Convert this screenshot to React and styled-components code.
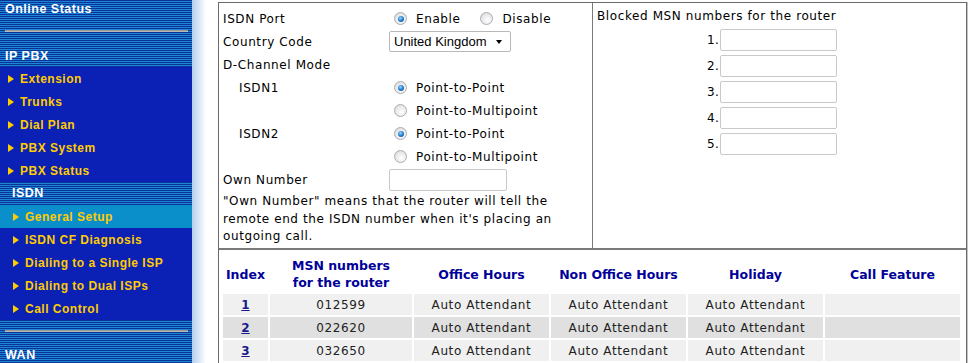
import React from "react";
import styled, { createGlobalStyle } from "styled-components";

const GlobalStyle = createGlobalStyle`
  html, body {
    margin: 0;
    padding: 0;
    background: #fff;
  }
  body {
    width: 975px;
    height: 363px;
    overflow: hidden;
    font-family: "DejaVu Sans", Verdana, sans-serif;
  }
`;

const Page = styled.div`
  display: flex;
  height: 363px;
  overflow: hidden;
`;

/* ---------- left menu ---------- */

const Sidebar = styled.nav`
  width: 192px;
  flex: none;
  display: flex;
  flex-direction: column;
  font-family: "Liberation Sans", Arial, sans-serif;
  font-weight: bold;
  font-size: 12px;
  letter-spacing: 0.5px;
`;

const Stripes = styled.div`
  flex: ${(p) => (p.$grow ? 1 : "none")};
  background: repeating-linear-gradient(
    to bottom,
    #0a3596 0px,
    #0a3596 1px,
    #1d84d6 1px,
    #1d84d6 2px
  );
`;

const SectionTitle = styled.div`
  color: #fff;
  height: ${(p) => p.$h}px;
  line-height: ${(p) => p.$h}px;
  padding-left: ${(p) => (p.$indent ? 12 : 5)}px;
  font-size: 12.5px;
`;

const Separator = styled.div`
  height: 2px;
  margin: ${(p) => p.$top}px 4px ${(p) => p.$bottom}px 5px;
  background: #b8b8b8;
  border-top: 1px solid #9a9a9a;
  box-sizing: border-box;
`;

const MenuBlock = styled.div`
  background: #0b20b4;
`;

const MenuItem = styled.div`
  height: 23px;
  display: flex;
  align-items: center;
  gap: 6px;
  padding-left: ${(p) => (p.$sub ? 13 : 8)}px;
  color: #ffcc00;
  background: ${(p) => (p.$active ? "#0b8fca" : "transparent")};
`;

const Marker = styled.span`
  width: 0;
  height: 0;
  border-left: 6px solid #ffcc00;
  border-top: 4.5px solid transparent;
  border-bottom: 4.5px solid transparent;
`;

const Shade = styled.div`
  width: 14px;
  flex: none;
  background: linear-gradient(to right, #b5cfee, #ffffff);
`;

/* ---------- main panel ---------- */

const Main = styled.main`
  align-self: flex-start;
  margin: 2px 0 0 12px;
  width: 747px;
  height: 420px;
  border: 1px solid #6a6a6a;
  box-shadow: 1px 0 0 #c4c4c4;
  font-size: 12px;
  letter-spacing: 0.6px;
  color: #000;
`;

const TopArea = styled.div`
  display: grid;
  grid-template-columns: 373px 1fr;
  height: 245px;
  border-bottom: 2px solid #7a7a7a;
`;

const LeftPanel = styled.div`
  padding: 4px 4px 0 4px;
`;

const FormGrid = styled.div`
  display: grid;
  grid-template-columns: 166px 1fr;
  grid-auto-rows: 23px;
  align-items: center;
`;

const Label = styled.div`
  padding-left: ${(p) => (p.$indent ? 16 : 0)}px;
  white-space: nowrap;
`;

const Options = styled.div`
  display: flex;
  align-items: center;
`;

const Choice = styled.label`
  display: inline-flex;
  align-items: center;
  gap: 9px;
  margin-left: 5px;
  margin-right: 15px;
  white-space: nowrap;
`;

const Radio = styled.span`
  width: 13px;
  height: 13px;
  flex: none;
  box-sizing: border-box;
  border-radius: 50%;
  border: 1px solid #a9adb3;
  background: radial-gradient(circle at 60% 65%, #ffffff 0%, #e9e9e9 55%, #cfd1d4 100%);
  display: inline-flex;
  align-items: center;
  justify-content: center;
  &::after {
    content: "";
    display: ${(p) => (p.$checked ? "block" : "none")};
    width: 6px;
    height: 6px;
    border-radius: 50%;
    background: radial-gradient(circle at 40% 35%, #9fd8ff 0%, #2a86d6 45%, #0c3f86 100%);
  }
`;

const SelectBox = styled.div`
  width: 122px;
  height: 21px;
  box-sizing: border-box;
  border: 1px solid #b8b8b8;
  border-radius: 2px;
  display: flex;
  align-items: center;
  justify-content: space-between;
  padding: 0 8px 0 4px;
  font-family: "Liberation Sans", Arial, sans-serif;
  font-size: 13px;
  letter-spacing: 0;
  color: #000;
`;

const Caret = styled.span`
  width: 0;
  height: 0;
  border-top: 4px solid #000;
  border-left: 3.5px solid transparent;
  border-right: 3.5px solid transparent;
`;

const TextInput = styled.input`
  width: ${(p) => p.$w}px;
  height: 22px;
  box-sizing: border-box;
  border: 1px solid #c9c9c9;
  border-radius: 2px;
  margin: 0 0 0 ${(p) => p.$ml || 0}px;
  padding: 0 3px;
  background: #fff;
`;

const Note = styled.p`
  margin: 2px 0 0;
  line-height: 17.5px;
`;

const RightPanel = styled.div`
  border-left: 1px solid #7a7a7a;
  padding: 5px 0 0 4px;
`;

const BlockTitle = styled.div`
  line-height: 17px;
`;

const MsnList = styled.div`
  display: flex;
  flex-direction: column;
  gap: 4px;
  margin-top: 4px;
`;

const MsnRow = styled.div`
  display: flex;
  align-items: center;
`;

const MsnNo = styled.span`
  width: 122px;
  text-align: right;
  letter-spacing: 0.3px;
`;

const Table = styled.table`
  margin: 4px 0 0 2px;
  border-collapse: separate;
  border-spacing: 2px;
  table-layout: fixed;
  width: 741px;
`;

const Th = styled.th`
  height: 36px;
  padding: 0;
  color: #000099;
  font-size: 12.5px;
  font-weight: bold;
  letter-spacing: 0;
  line-height: 17px;
  text-align: center;
  vertical-align: middle;
`;

const Td = styled.td`
  height: 21px;
  padding: 0;
  text-align: center;
  color: #222;
  background: ${(p) => (p.$alt ? "#e0e0e0" : "#f0f0f0")};
`;

const IndexLink = styled.a`
  color: #1a1a8c;
  font-weight: bold;
  letter-spacing: 0;
  text-decoration: underline;
`;

const menuIpPbx = ["Extension", "Trunks", "Dial Plan", "PBX System", "PBX Status"];
const menuIsdn = [
  "General Setup",
  "ISDN CF Diagnosis",
  "Dialing to a Single ISP",
  "Dialing to Dual ISPs",
  "Call Control",
];
const rows = [
  { id: 1, msn: "012599" },
  { id: 2, msn: "022620" },
  { id: 3, msn: "032650" },
];

export default function App() {
  return (
    <>
      <GlobalStyle />
      <Page>
        <Sidebar>
          <Stripes>
            <SectionTitle $h={19}>Online Status</SectionTitle>
            <Separator $top={11} $bottom={13} />
            <SectionTitle $h={22}>IP PBX</SectionTitle>
          </Stripes>
          <MenuBlock>
            {menuIpPbx.map((m) => (
              <MenuItem key={m}>
                <Marker />
                {m}
              </MenuItem>
            ))}
          </MenuBlock>
          <Stripes>
            <SectionTitle $h={23} $indent>
              ISDN
            </SectionTitle>
          </Stripes>
          <MenuBlock>
            {menuIsdn.map((m, i) => (
              <MenuItem key={m} $sub $active={i === 0}>
                <Marker />
                {m}
              </MenuItem>
            ))}
          </MenuBlock>
          <Stripes $grow>
            <Separator $top={10} $bottom={12} />
            <SectionTitle $h={22}>WAN</SectionTitle>
          </Stripes>
        </Sidebar>
        <Shade />
        <Main>
          <TopArea>
            <LeftPanel>
              <FormGrid>
                <Label>ISDN Port</Label>
                <Options>
                  <Choice>
                    <Radio $checked />
                    Enable
                  </Choice>
                  <Choice>
                    <Radio />
                    Disable
                  </Choice>
                </Options>
                <Label>Country Code</Label>
                <SelectBox>
                  United Kingdom
                  <Caret />
                </SelectBox>
                <Label>D-Channel Mode</Label>
                <div />
                <Label $indent>ISDN1</Label>
                <Options>
                  <Choice>
                    <Radio $checked />
                    Point-to-Point
                  </Choice>
                </Options>
                <div />
                <Options>
                  <Choice>
                    <Radio />
                    Point-to-Multipoint
                  </Choice>
                </Options>
                <Label $indent>ISDN2</Label>
                <Options>
                  <Choice>
                    <Radio $checked />
                    Point-to-Point
                  </Choice>
                </Options>
                <div />
                <Options>
                  <Choice>
                    <Radio />
                    Point-to-Multipoint
                  </Choice>
                </Options>
                <Label>Own Number</Label>
                <TextInput $w={118} />
              </FormGrid>
              <Note>
                "Own Number" means that the router will tell the remote end the ISDN
                number when it's placing an outgoing call.
              </Note>
            </LeftPanel>
            <RightPanel>
              <BlockTitle>Blocked MSN numbers for the router</BlockTitle>
              <MsnList>
                {[1, 2, 3, 4, 5].map((n) => (
                  <MsnRow key={n}>
                    <MsnNo>{n}.</MsnNo>
                    <TextInput $w={117} $ml={1} />
                  </MsnRow>
                ))}
              </MsnList>
            </RightPanel>
          </TopArea>
          <Table>
            <colgroup>
              <col style={{ width: 45 }} />
              <col style={{ width: 142 }} />
              <col style={{ width: 135 }} />
              <col style={{ width: 135 }} />
              <col style={{ width: 135 }} />
              <col style={{ width: 135 }} />
            </colgroup>
            <thead>
              <tr>
                <Th>Index</Th>
                <Th>
                  MSN numbers
                  <br />
                  for the router
                </Th>
                <Th>Office Hours</Th>
                <Th>Non Office Hours</Th>
                <Th>Holiday</Th>
                <Th>Call Feature</Th>
              </tr>
            </thead>
            <tbody>
              {rows.map((r, i) => (
                <tr key={r.id}>
                  <Td $alt={i % 2 === 1}>
                    <IndexLink href="#">{r.id}</IndexLink>
                  </Td>
                  <Td $alt={i % 2 === 1}>{r.msn}</Td>
                  <Td $alt={i % 2 === 1}>Auto Attendant</Td>
                  <Td $alt={i % 2 === 1}>Auto Attendant</Td>
                  <Td $alt={i % 2 === 1}>Auto Attendant</Td>
                  <Td $alt={i % 2 === 1} />
                </tr>
              ))}
            </tbody>
          </Table>
        </Main>
      </Page>
    </>
  );
}
